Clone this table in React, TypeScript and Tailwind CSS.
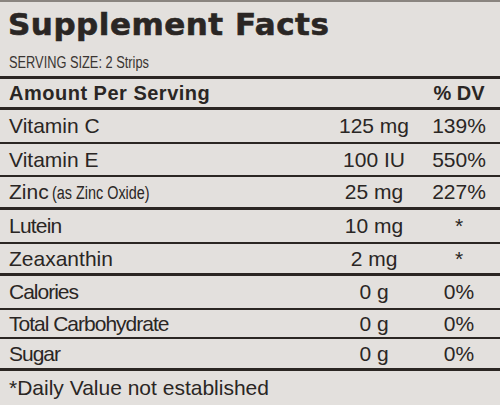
const ROWS = [
  { label: "Vitamin C", amount: "125 mg", dv: "139%", h: "h-[34px]", line: "border-b-2", track: "" },
  { label: "Vitamin E", amount: "100 IU", dv: "550%", h: "h-[33px]", line: "border-b-2", track: "" },
  { label: "Zinc", note: "(as Zinc Oxide)", amount: "25 mg", dv: "227%", h: "h-[33px]", line: "border-b-[3px]", track: "" },
  { label: "Lutein", amount: "10 mg", dv: "*", h: "h-[34px]", line: "border-b-2", track: "tracking-[-0.8px]" },
  { label: "Zeaxanthin", amount: "2 mg", dv: "*", h: "h-[32px]", line: "border-b-[3px]", track: "" },
  { label: "Calories", amount: "0 g", dv: "0%", h: "h-[34px]", line: "border-b-2", track: "tracking-[-1px]" },
  { label: "Total Carbohydrate", amount: "0 g", dv: "0%", h: "h-[29px]", line: "border-b-2", track: "tracking-[-1px]" },
  { label: "Sugar", amount: "0 g", dv: "0%", h: "h-[32px]", line: "border-b-[3px]", track: "tracking-[-1px]" },
];

export default function App() {
  return (
    <div className="w-[500px] h-[405px] overflow-hidden bg-[#e3e0dd] text-[#2a2624] font-['Liberation_Sans',Arial,sans-serif]">
      {/* Title + serving size */}
      <div className="h-[79px] border-t-2 border-t-[#8a8580] border-b-[3px] border-b-[#2b2623] pl-[8px] flex flex-col">
        <h1 className="mt-[7px] text-[31px] leading-none font-bold tracking-[0.5px] font-['DejaVu_Sans',sans-serif] [-webkit-text-stroke:0.6px_#2a2624]">
          Supplement Facts
        </h1>
        <p className="mt-[15px] pl-[1px] text-[16px] leading-none text-[#3a3532] whitespace-nowrap">
          <span className="inline-block origin-left scale-x-[0.8]">SERVING SIZE: 2 Strips</span>
        </p>
      </div>

      {/* Column header */}
      <div className="h-[31px] border-b-[3px] border-[#2b2623] flex items-center">
        <span className="flex-1 pl-[9px] text-[20px] font-bold tracking-[0.5px]">Amount Per Serving</span>
        <span className="w-[82px] text-center text-[20px] font-bold">% DV</span>
      </div>

      {/* Nutrient rows */}
      {ROWS.map((r) => (
        <div key={r.label} className={`${r.h} ${r.line} border-[#2b2623] flex items-center text-[21px]`}>
          <span className={`flex-1 pl-[9px] whitespace-nowrap ${r.track}`}>
            {r.label}
            {r.note && (
              <span className="ml-[3px] inline-block origin-left scale-x-[0.8] text-[18px]">{r.note}</span>
            )}
          </span>
          <span className="w-[88px] text-center whitespace-nowrap">{r.amount}</span>
          <span className="w-[82px] text-center whitespace-nowrap">{r.dv}</span>
        </div>
      ))}

      {/* Footnote */}
      <div className="h-[34px] flex items-center pl-[9px] text-[21px]">
        *Daily Value not established
      </div>
    </div>
  );
}
